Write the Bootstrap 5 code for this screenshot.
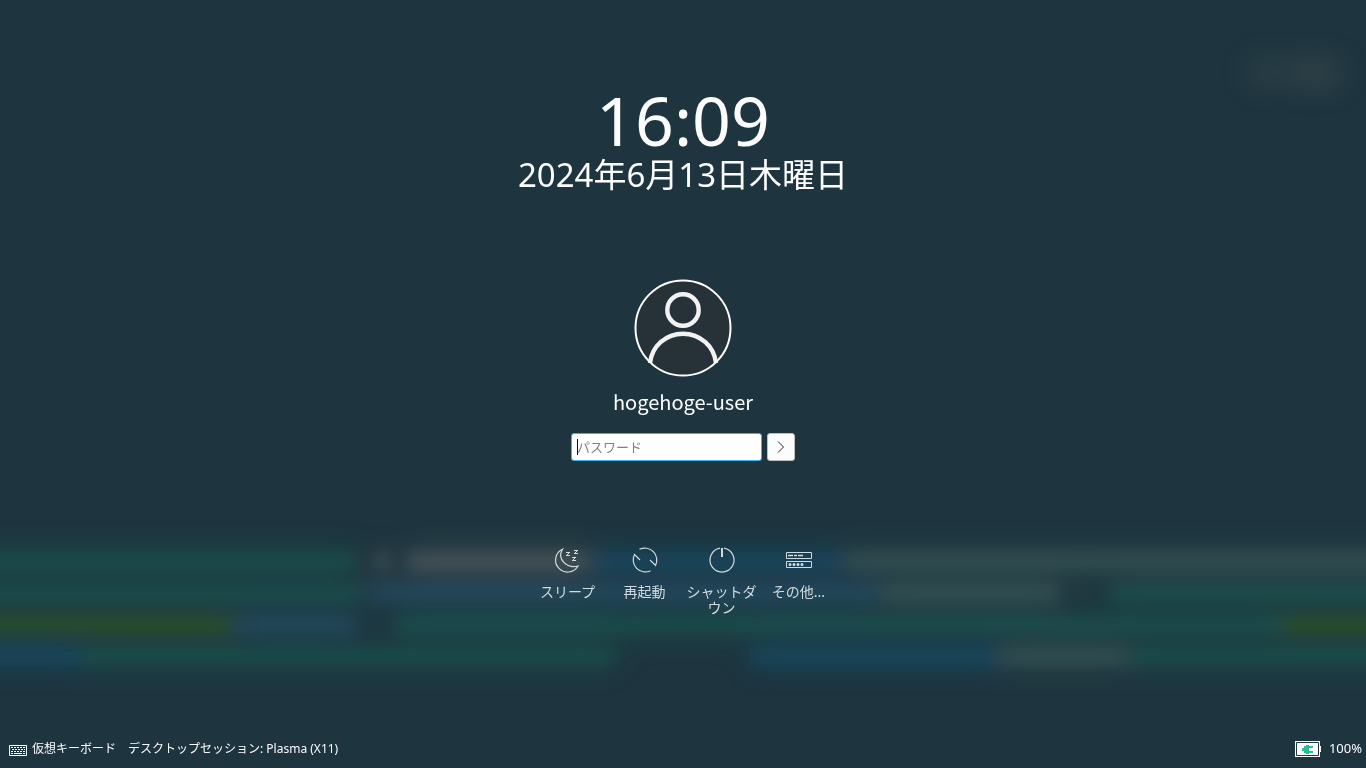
<!DOCTYPE html>
<html lang="ja">
<head>
<meta charset="utf-8">
<meta name="viewport" content="width=device-width, initial-scale=1">
<title>ログイン</title>
<link href="https://cdn.jsdelivr.net/npm/bootstrap@5.3.0/dist/css/bootstrap.min.css" rel="stylesheet">
<style>
body{background:#1e353f;color:#fcfcfc;font-family:"Noto Sans","Noto Sans CJK JP",sans-serif;font-feature-settings:"palt";overflow:hidden}
.wallpaper{position:fixed;inset:0;width:100%;height:100%;z-index:-1}
.greeter{padding-top:82px}
.clock-time{font-size:68px;line-height:76px}
.clock-date{font-size:33px;line-height:34px;font-feature-settings:normal}
.login{margin-top:87px}
.user-name{font-family:"Noto Sans CJK JP",sans-serif;font-size:20px;line-height:28px;margin-top:11px;font-feature-settings:normal}
.login-form{gap:5px;margin-top:17px}
.password-box{width:191px}
.password-box .form-control{height:28px;padding:0 5px;border:1px solid #3daee9;border-radius:3px;background:#fff;color:#232629;font-size:13px;line-height:24px;box-shadow:none;caret-color:transparent}
.password-box .form-control::placeholder{color:#7b8085;opacity:1}
.text-caret{left:6px;top:6px;width:1px;height:16px;background:#111}
.btn-login{width:28px;height:28px;border:1px solid #bcbebf;border-radius:3px;background:#fcfcfc}
.btn-login:hover{background:#eff0f1}
.actions{margin-top:83px}
.action{width:77px;padding:0 3px;font-size:14px;line-height:16px;color:#d3dadd;border:0;word-break:break-all;line-break:anywhere}
.action:hover{color:#fff}
.action svg{margin-bottom:8px}
.status-bar{height:38px;font-size:13px;padding:0 4px 0 9px}
.status-bar button{font-size:12px;color:#fcfcfc;border:0}
</style>
</head>
<body class="d-flex flex-column min-vh-100">
<svg class="wallpaper" viewBox="0 0 1366 768" preserveAspectRatio="none" aria-hidden="true">
  <defs>
    <filter id="wide" filterUnits="userSpaceOnUse" x="-100" y="0" width="1566" height="768"><feGaussianBlur stdDeviation="16"/></filter>
    <filter id="near" filterUnits="userSpaceOnUse" x="-100" y="0" width="1566" height="768"><feGaussianBlur stdDeviation="7"/></filter>
    <g id="bars">
      <path fill="#127560" d="M-60 552h415v18H-60zM-60 584h422v18H-60zM395 616h885v18H395zM80 648h535v18H80zM1110 584h316v18h-316zM1128 648h298v18h-298z"/>
      <path fill="#0c6490" d="M592 552h250v18H592zM-60 648h140v18H-60zM750 648h248v18H750z"/>
      <path fill="#2b678c" d="M370 584h510v18H370zM238 616h118v18H238z"/>
      <path fill="#3d7800" d="M-60 616h295v18H-60zM1280 616h146v18h-146z"/>
      <path fill="#8b8680" d="M408 552h180v18H408zM375 553h14v16h-14z"/>
      <path fill="#577a70" d="M845 552h581v18H845zM882 584h178v18H882zM1000 648h126v18h-126z"/>
    </g>
  </defs>
  <use href="#bars" filter="url(#wide)" opacity=".3"/>
  <use href="#bars" filter="url(#near)" opacity=".22"/>
  <g fill="#7a736e" filter="url(#wide)" opacity=".35"><circle cx="1263" cy="72" r="12"/><rect x="1290" y="63" width="48" height="20"/></g>
</svg>

<main class="greeter flex-grow-1 d-flex flex-column align-items-center text-center">
  <time class="clock-time">16:09</time>
  <div class="clock-date">2024年6月13日木曜日</div>

  <section class="login d-flex flex-column align-items-center">
    <svg width="98" height="98" viewBox="0 0 98 98" fill="none" aria-hidden="true">
      <circle cx="49" cy="49" r="48" fill="#263238"/>
      <circle cx="49" cy="31" r="15.7" stroke="#f2f2f2" stroke-width="4.4"/>
      <path d="M16 84C18 67 32 54.7 49 54.7S80 67 82 84" stroke="#f2f2f2" stroke-width="4.400"/>
      <circle cx="49" cy="49" r="47.500" stroke="#fcfcfc" stroke-width="2"/>
    </svg>
    <div class="user-name">hogehoge-user</div>
    <form class="login-form d-flex" onsubmit="return false">
      <div class="password-box position-relative">
        <label class="visually-hidden" for="password">パスワード</label>
        <input class="form-control" type="password" id="password" placeholder="パスワード">
        <span class="text-caret position-absolute"></span>
      </div>
      <button class="btn btn-login p-0 d-flex align-items-center justify-content-center" type="submit" aria-label="ログイン">
        <svg width="16" height="16" viewBox="0 0 16 16" fill="none" stroke="#232629"><path d="M5 2.500l5.500 5.500L5 13.500"/></svg>
      </button>
    </form>
  </section>

  <nav class="actions d-flex align-items-start">
    <button class="action btn d-flex flex-column align-items-center" type="button">
      <svg width="32" height="32" viewBox="0 0 32 32" fill="none" stroke="currentColor" stroke-width="1.200"><path d="M10.500 5.200A12 12 0 1 0 26 22C15 25 4.500 15 10.500 5.200z"/><path fill="currentColor" stroke="none" shape-rendering="crispEdges" d="M14 8h4v1h-4zM16 9h1v1h-1zM15 10h1v1h-1zM14 11h4v1h-4zM22 6h4v1h-4zM24 7h1v1h-1zM23 8h1v1h-1zM22 9h4v1h-4zM20 13h4v1h-4zM22 14h1v1h-1zM21 15h1v1h-1zM20 16h4v1h-4z"/></svg>
      <span>スリープ</span>
    </button>
    <button class="action btn d-flex flex-column align-items-center" type="button">
      <svg width="32" height="32" viewBox="0 0 32 32" fill="none" stroke="currentColor" stroke-width="1.200"><path d="M10.500 5.300A12 12 0 0 1 26.500 21.500L21 16M21.500 26.700A12 12 0 0 1 5.500 10.500L11 16"/></svg>
      <span>再起動</span>
    </button>
    <button class="action btn d-flex flex-column align-items-center" type="button">
      <svg width="32" height="32" viewBox="0 0 32 32" fill="none" stroke="currentColor" stroke-width="1.200"><path d="M14 4.200a12 12 0 1 0 4 0"/><path stroke-width="2" d="M16 4v9"/></svg>
      <span>シャットダウン</span>
    </button>
    <button class="action btn d-flex flex-column align-items-center" type="button">
      <svg width="32" height="32" viewBox="0 0 32 32" fill="none" stroke="currentColor"><path d="M3.500 8.500h25v6h-25zM3.500 17.500h25v6h-25z"/><path stroke-width="1.500" d="M5 11.500h5M11 11.500h3M15 11.500h5"/><path stroke-width="3" stroke-linecap="round" stroke-dasharray="0 4" d="M7 20.500h13"/></svg>
      <span>その他...</span>
    </button>
  </nav>
</main>

<footer class="status-bar d-flex align-items-center justify-content-between">
  <div class="d-flex align-items-center">
    <button class="btn p-0 d-flex align-items-center" type="button">
      <svg class="me-1" width="19" height="16" viewBox="0 0 19 16" fill="none" stroke="currentColor"><path d="M.5 4.500h17v10H.5z"/><path stroke-dasharray="2 1" d="M2 6.500h14M3 8.500h13M2 10.500h14"/><path d="M2 12.500h2M5 12.500h8M14 12.500h2"/></svg>
      仮想キーボード
    </button>
    <button class="btn p-0 ms-2 ps-1" type="button">デスクトップセッション: Plasma (X11)</button>
  </div>
  <div class="d-flex align-items-center">
    <svg class="me-2" width="26" height="16" viewBox="0 0 26 16" aria-hidden="true"><path fill="#fcfcfc" d="M0 0h25v5h1v6h-1v5H0z"/><path fill="none" stroke="#1e353f" d="M1.500 1.500h22v13h-22z"/><path fill="#27bd9a" d="M7 7h2V5h2V4h3v1h4v2h-4v3h4v2h-4v1h-3v-1H9v-2H7z"/></svg>
    <span>100%</span>
  </div>
</footer>
<script src="https://cdn.jsdelivr.net/npm/bootstrap@5.3.0/dist/js/bootstrap.bundle.min.js"></script>
</body>
</html>
